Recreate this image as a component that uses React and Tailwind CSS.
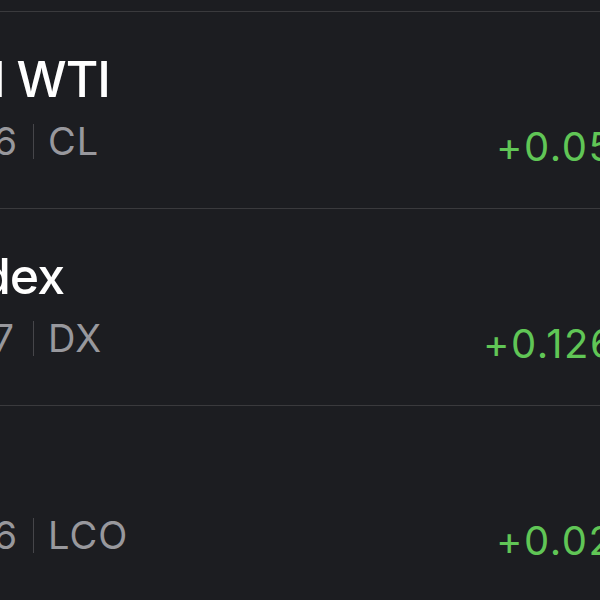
import React from 'react'

const rows = [
	{ name: 'Crude Oil WTI', nameEnd: 110, price: '78.26', priceEnd: 18, code: 'CL', change: '+0.056', changeX: 13 },
	{ name: 'US Dollar Index', nameEnd: 64, price: '104.07', priceEnd: 15, code: 'DX', change: '+0.126', changeX: 0 },
	{ name: 'Brent Oil', nameEnd: -6, price: '82.56', priceEnd: 18, code: 'LCO', change: '+0.025', changeX: 13 },
]

function Row({ row }) {
	return (
		<div className="flex h-[197px] border-t border-[#3a3a3d]">
			<div className="w-[483px] shrink-0 pt-[42px]">
				<div className="flex" style={{ width: Math.max(row.nameEnd, 0), marginLeft: Math.min(row.nameEnd, 0) }}>
					<div className="flex w-full justify-end whitespace-nowrap text-[50px] leading-[50px] font-medium tracking-[-1px] text-white">
						{row.name}
					</div>
				</div>
				<div className="mt-[18px] flex items-center text-[38px] leading-[38px] tracking-[1px] text-[#98989d]">
					<div className="flex justify-end whitespace-nowrap" style={{ width: row.priceEnd }}>{row.price}</div>
					<div className="mr-[14px] h-[35px] w-px bg-[#46464a]" style={{ marginLeft: 15 + (18 - row.priceEnd) }}></div>
					<div className="whitespace-nowrap">{row.code}</div>
				</div>
			</div>
			<div className="pt-[115px] whitespace-nowrap text-[40px] leading-[40px] tracking-[1.5px] text-[#60c656]" style={{ paddingLeft: row.changeX }}>
				{row.change}
			</div>
		</div>
	)
}

export default function App() {
	return (
		<div className="h-[600px] w-[600px] overflow-hidden bg-[#1c1d21] pt-[11px] font-['Inter','Noto_Sans',sans-serif]">
			{rows.map((row) => (
				<Row key={row.code} row={row} />
			))}
		</div>
	)
}
